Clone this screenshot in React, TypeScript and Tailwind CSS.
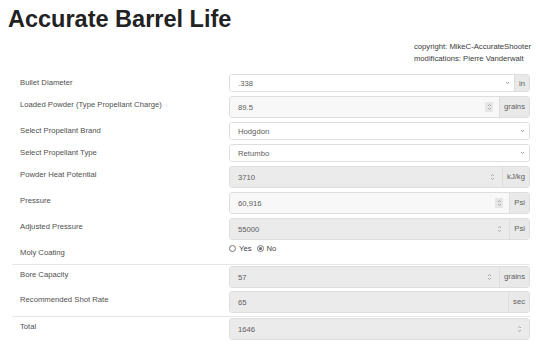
import React from 'react'

type Tone = 'white' | 'light' | 'gray'

const toneClass: Record<Tone, string> = {
  white: 'bg-white',
  light: 'bg-[#f8f8f8]',
  gray: 'bg-[#ebebeb]',
}

function Spinner({ boxed }: { boxed?: boolean }) {
  return (
    <span
      className={
        'mr-[6px] flex h-[10px] w-[8px] items-center justify-center rounded-[1px] ' +
        (boxed ? 'bg-[#e6e6e6]' : '')
      }
    >
      <svg width="5" height="8" viewBox="0 0 5 8" fill="none" stroke="#9a9a9a" strokeWidth="0.8">
        <path d="M1 3 L2.5 1.5 L4 3" />
        <path d="M1 5 L2.5 6.5 L4 5" />
      </svg>
    </span>
  )
}

function Chevron() {
  return (
    <svg className="mr-[4px]" width="5" height="4" viewBox="0 0 5 4" fill="none" stroke="#888" strokeWidth="0.8">
      <path d="M1 1 L2.5 2.6 L4 1" />
    </svg>
  )
}

interface FieldProps {
  value: string
  tone?: Tone
  tall?: boolean
  addon?: string
  kind?: 'select' | 'number' | 'text'
  boxedSpin?: boolean
}

function Field({ value, tone = 'gray', tall = true, addon, kind = 'number', boxedSpin }: FieldProps) {
  return (
    <div
      className={
        'flex flex-1 overflow-hidden rounded-[3px] border border-[#dedede] ' + (tall ? 'h-[22px]' : 'h-[18px]')
      }
    >
      <div className={'flex flex-1 items-center pl-[8px] ' + toneClass[tone]}>
        <span className="flex-1 text-[#5e5e5e]">{value}</span>
        {kind === 'number' && <Spinner boxed={boxedSpin} />}
        {kind === 'select' && <Chevron />}
      </div>
      {addon && (
        <div
          className={
            'border-l border-[#dedede] bg-[#e9e9e9] px-[4px] text-[#5e5e5e] ' +
            (tall ? 'pt-[4px]' : 'flex items-center')
          }
        >
          {addon}
        </div>
      )}
    </div>
  )
}

function Row({ label, children, line }: { label: string; children: React.ReactNode; line?: boolean }) {
  return (
    <div className={'flex ' + (line ? 'border-t border-[#e6e6e6] pt-[1px]' : '')}>
      <div className="w-[217px] shrink-0 pl-2 pt-[3px] text-[#505050]">{label}</div>
      <div className="flex flex-1">{children}</div>
    </div>
  )
}

function Radio({ checked, label }: { checked?: boolean; label: string }) {
  return (
    <span className="mr-[5px] flex items-center">
      <span className="mr-[3px] flex h-[7px] w-[7px] items-center justify-center rounded-full border border-[#777] bg-white">
        {checked && <span className="h-[3px] w-[3px] rounded-full bg-[#666]" />}
      </span>
      <span className="text-[#444]">{label}</span>
    </span>
  )
}

export default function App() {
  return (
    <div
      className="h-[344px] w-[540px] overflow-hidden bg-white text-[7.7px] leading-[11px]"
      style={{ fontFamily: '"Liberation Sans", Arial, sans-serif' }}
    >
      <div className="pl-2 pt-[5px]">
        <h1 className="text-[23.5px] font-bold leading-[28px] text-[#222]">Accurate Barrel Life</h1>
      </div>

      <div className="mt-[8px] flex justify-end pr-[9px] text-[#3a3a3a] leading-[12px]">
        <div>
          <div>copyright: MikeC-AccurateShooter</div>
          <div>modifications: Pierre Vanderwalt</div>
        </div>
      </div>

      <div className="ml-3 mr-[10px] mt-[9px] flex flex-col">
        <div className="mb-[4px]">
          <Row label="Bullet Diameter">
            <Field value=".338" tone="white" tall={false} kind="select" addon="in" />
          </Row>
        </div>
        <div className="mb-[4px]">
          <Row label="Loaded Powder (Type Propellant Charge)">
            <Field value="89.5" tone="light" addon="grains" boxedSpin />
          </Row>
        </div>
        <div className="mb-[4px]">
          <Row label="Select Propellant Brand">
            <Field value="Hodgdon" tone="white" tall={false} kind="select" />
          </Row>
        </div>
        <div className="mb-[4px]">
          <Row label="Select Propellant Type">
            <Field value="Retumbo" tone="white" tall={false} kind="select" />
          </Row>
        </div>
        <div className="mb-[4px]">
          <Row label="Powder Heat Potential">
            <Field value="3710" addon="kJ/kg" />
          </Row>
        </div>
        <div className="mb-[4px]">
          <Row label="Pressure">
            <Field value="60,916" tone="light" addon="Psi" boxedSpin />
          </Row>
        </div>
        <div className="mb-[4px]">
          <Row label="Adjusted Pressure">
            <Field value="55000" addon="Psi" />
          </Row>
        </div>
        <div className="h-[20px]">
          <div className="flex">
            <div className="w-[217px] shrink-0 pl-2 pt-[3px] text-[#505050]">Moly Coating</div>
            <div className="-mt-[1px] flex items-start">
              <Radio label="Yes" />
              <Radio label="No" checked />
            </div>
          </div>
        </div>
        <div className="mb-[3px]">
          <Row label="Bore Capacity" line>
            <Field value="57" addon="grains" />
          </Row>
        </div>
        <div className="mb-[3px]">
          <Row label="Recommended Shot Rate">
            <Field value="65" addon="sec" kind="text" />
          </Row>
        </div>
        <Row label="Total" line>
          <Field value="1646" />
        </Row>
      </div>
    </div>
  )
}
